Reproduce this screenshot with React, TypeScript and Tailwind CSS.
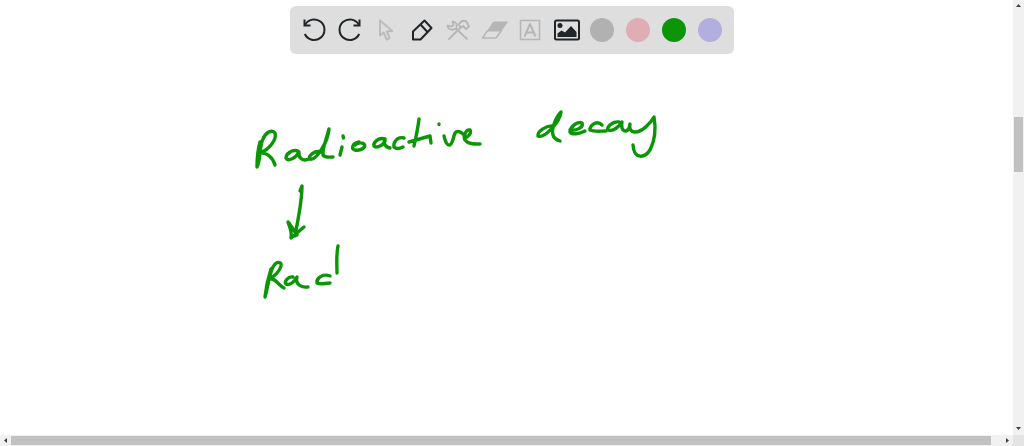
import { useState, type ReactNode } from "react";

type Tool = { label: string; tone: string; icon: ReactNode };

const tools: Tool[] = [
  {
    label: "Undo",
    tone: "text-[#202529]",
    icon: (
      <>
        <path d="M4.500 3.500v6h6" strokeLinejoin="miter" />
        <path d="M5 9A10.300 10.300 0 1 1 4.800 18" />
      </>
    ),
  },
  {
    label: "Redo",
    tone: "text-[#202529]",
    icon: (
      <>
        <path d="M23.500 3.500v6h-6" strokeLinejoin="miter" />
        <path d="M23 9A10.300 10.300 0 1 0 23.200 18" />
      </>
    ),
  },
  {
    label: "Select",
    tone: "text-[#bcbcbc]",
    icon: <path d="M8 4.500v15l3.700-3 3 7 3-1.300-2.900-6.700 5.500-.500z" />,
  },
  {
    label: "Pen",
    tone: "text-[#202529]",
    icon: (
      <>
        <path d="M5 23.500v-8L16.500 4.500l7 7.500-11 11.500z" />
        <path d="M12.500 8.500l7 7.500" />
      </>
    ),
  },
  {
    label: "Tools",
    tone: "text-[#b6b6b6]",
    icon: (
      <g strokeWidth="1.800" strokeLinecap="round">
        <path d="M5 23L17 11" />
        <path d="M14.500 8.500L18 5h4l3 5.500-3 2.500-3-3-2 1.500z" />
        <path d="M23 23L12 12.500" />
        <path d="M3.500 9.500C4 13.500 8 15 12 12.500C14 9 12 5.500 8.500 5.500L9.500 9L7.500 10.500z" />
      </g>
    ),
  },
  {
    label: "Eraser",
    tone: "text-[#b6b6b6]",
    icon: (
      <>
        <path d="M13.500 6H27.500l-6.500 9H7.500z" fill="currentColor" strokeWidth="1" />
        <path d="M7.500 14.500L2.500 22h13.500l5.500-7.500" strokeWidth="1.500" />
      </>
    ),
  },
  {
    label: "Text",
    tone: "text-[#b6b6b6]",
    icon: (
      <>
        <path d="M4.500 4.500h19v19h-19z" strokeWidth="1.600" strokeLinejoin="miter" />
        <path d="M8.500 20.500L14 8l5.500 12.500M10.500 16.500h7" />
      </>
    ),
  },
  {
    label: "Image",
    tone: "text-[#202529]",
    icon: (
      <>
        <rect x="3" y="4.500" width="24" height="19" rx="1.500" />
        <circle cx="8" cy="9.500" r="2.500" fill="currentColor" stroke="none" />
        <path d="M5.500 21v-3.500l4-3 3.500 2 6-6.500 5.500 6v5z" fill="currentColor" stroke="none" />
      </>
    ),
  },
];

const colours = [
  { label: "Grey", fill: "bg-[#b1b1b1]" },
  { label: "Pink", fill: "bg-[#e1adb5]" },
  { label: "Green", fill: "bg-[#0c9607]" },
  { label: "Lavender", fill: "bg-[#b3aee0]" },
];

const strokes = [
  // Radioactive
  "M260 142C258 149 257 157 257 167C261 160 259 147 263 139C266 132 272 129 275 133C277 139 270 149 260 153C267 152 273 158 275 165",
  "M298 151C292 149 286 154 286 158C288 162 296 158 299 152C298 157 302 162 309 159",
  "M322 152C314 150 308 156 310 159C316 161 328 142 329 129C327 137 322 149 323 155C325 158 329 157 333 157",
  "M342 147L340 155M343 136L343.500 138",
  "M359 142C353 143 350 149 355 150C361 151 367 147 364 144C361 142 357 143 355 145",
  "M385 139C378 137 373 143 374 146C377 149 386 144 385 139C383 143 385 147 390 148",
  "M404 138C397 136 393 143 394 147C396 149 399 149 403 147",
  "M419 119C418 128 416 137 414 146M409 142L430 136L431 143M439 124L439 124.500",
  "M444 136C445 141 447 146 450 145C454 142 453 134 456 132C458 131 461 132 463 134M465 138C468 137 472 133 470 130C466 129 463 136 465 140C468 144 473 144 480 144",
  // decay
  "M553 126C546 125 537 132 538 136C544 139 560 122 561 112C556 117 551 129 553 135C554 139 557 140 560 141",
  "M570 130C577 131 584 127 582 123C577 121 570 127 570 132C572 135 579 134 585 131",
  "M602 125C596 119 589 127 590 130C594 132 600 131 606 131",
  "M619 122C612 121 606 128 608 130C613 132 620 126 622 122C621 127 622 131 626 131C630 130 629 127 630 124C629 129 631 132 635 132C642 132 650 124 654 117C656 128 655 140 650 150C645 158 634 160 633 145",
  // Arrow
  "M300 191L302 186C302 202 298 219 295 236M288 222C290 227 292 234 291 238L304 227M289 223L297 235",
  // Second line
  "M271 269C268 278 266 287 265 297C268 287 269 275 273 267C277 260 282 262 281 266C280 271 274 277 269 279C275 277 278 285 284 288",
  "M293 277C288 276 284 282 286 284C290 286 295 281 297 277C295 283 300 288 308 287",
  "M330 276C322 273 316 279 317 283C320 285 325 283 330 283",
  "M338 246C336 256 337 265 337 273",
];

function Toolbar() {
  const [active, setActive] = useState("Pen");
  return (
    <div role="toolbar" aria-label="Drawing tools" className="flex h-12 items-center rounded-md bg-[#dedede] px-1.5">
      {tools.map((tool) => (
        <button
          key={tool.label}
          type="button"
          aria-label={tool.label}
          aria-pressed={active === tool.label}
          onClick={() => setActive(tool.label)}
          className={"flex size-9 items-center justify-center " + tool.tone}
        >
          <svg viewBox="0 0 28 28" className="size-7" fill="none" stroke="currentColor" strokeWidth="2" strokeLinejoin="round" aria-hidden="true">
            {tool.icon}
          </svg>
        </button>
      ))}
      {colours.map((colour) => (
        <button key={colour.label} type="button" aria-label={colour.label} className="flex size-9 items-center justify-center">
          <span className={"size-6 rounded-full " + colour.fill} />
        </button>
      ))}
    </div>
  );
}

function Arrow({ label, d }: { label: string; d: string }) {
  return (
    <button type="button" aria-label={label} className="flex size-[11px] shrink-0 items-center justify-center">
      <svg viewBox="0 0 7 7" className="size-[7px]" fill="#404040" aria-hidden="true">
        <path d={d} />
      </svg>
    </button>
  );
}

export default function App() {
  return (
    <div className="grid h-screen grid-cols-[minmax(0,1fr)_11px] grid-rows-[minmax(0,1fr)_11px] bg-white font-['Liberation_Sans',sans-serif]">
      <main className="flex flex-col items-center gap-[46px] overflow-hidden pt-1.5 pl-[11px]">
        <Toolbar />
        <svg
          role="img"
          aria-label="Radioactive decay"
          viewBox="242 100 540 210"
          className="h-[210px] w-[540px] shrink-0"
          fill="none"
          stroke="#0c9607"
          strokeWidth="3.400"
          strokeLinecap="round"
          strokeLinejoin="round"
        >
          {strokes.map((d) => (
            <path key={d} d={d} />
          ))}
        </svg>
      </main>
      <div className="flex flex-col bg-[#f1f1f1]">
        <Arrow label="Scroll up" d="M1 5h5L3.500 2z" />
        <div className="flex min-h-0 flex-1 flex-col px-px">
          <div className="grow-[106]" />
          <div className="grow-[55] bg-[#c1c1c1]" />
          <div className="grow-[252]" />
        </div>
        <Arrow label="Scroll down" d="M1 1h5L3.500 4z" />
      </div>
      <div className="flex bg-[#f1f1f1]">
        <Arrow label="Scroll left" d="M5 1v5L2 3.500z" />
        <div className="flex min-w-0 flex-1 py-px">
          <div className="grow-[980] bg-[#c1c1c1]" />
          <div className="grow-[11]" />
        </div>
        <Arrow label="Scroll right" d="M2 1v5l3-2.500z" />
      </div>
      <div className="bg-[#e4e4e4]" />
    </div>
  );
}
